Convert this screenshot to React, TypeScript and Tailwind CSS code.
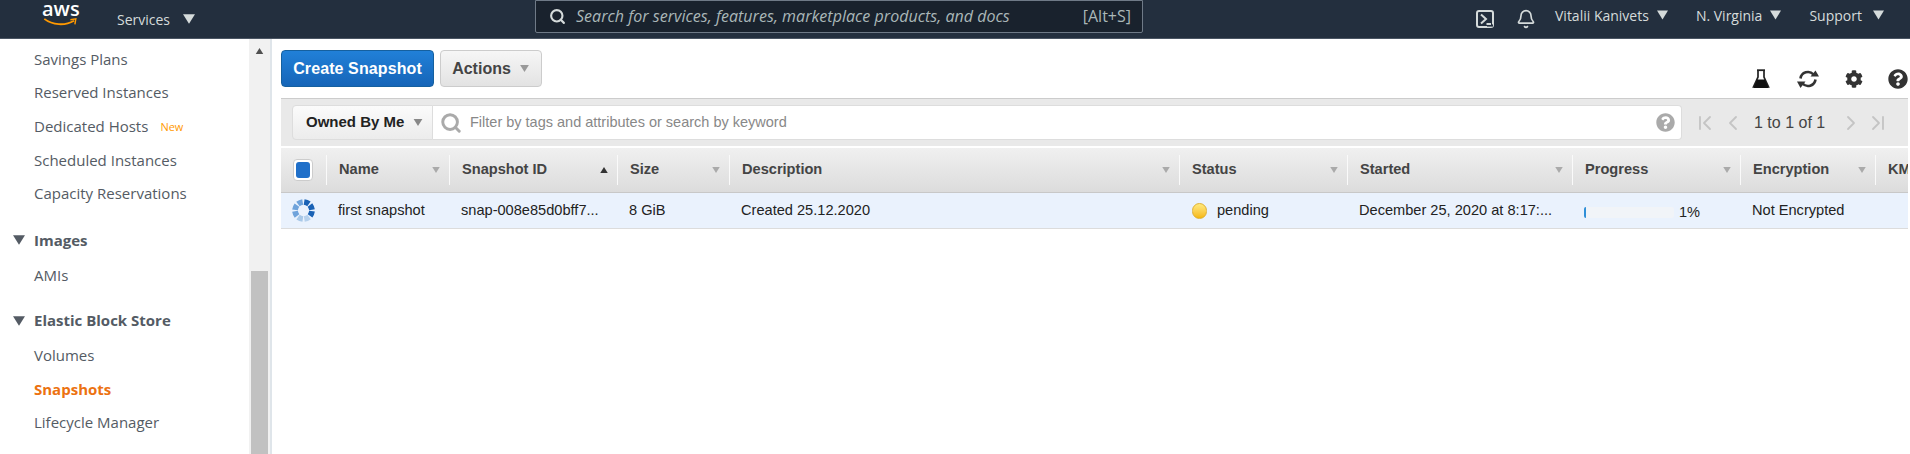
import React from 'react';
import { Bell, ChevronFirst, ChevronLast, ChevronLeft, ChevronRight, Search } from 'lucide-react';
import { FaCog, FaQuestionCircle } from 'react-icons/fa';

const sans = "font-['Liberation_Sans',Arial,sans-serif]";
const nav = "font-['Open_Sans',sans-serif]";

const columns = [
  { title: 'Name', width: 'w-[123px]', cell: 'first snapshot' },
  { title: 'Snapshot ID', width: 'w-[168px]', cell: 'snap-008e85d0bff7...', sorted: true },
  { title: 'Size', width: 'w-[112px]', cell: '8 GiB' },
  { title: 'Description', width: 'w-[450px]', cell: 'Created 25.12.2020' },
  { title: 'Status', width: 'w-[168px]', cell: 'pending' },
  { title: 'Started', width: 'w-[225px]', cell: 'December 25, 2020 at 8:17:...' },
  { title: 'Progress', width: 'w-[168px]', cell: '1%' },
  { title: 'Encryption', width: 'w-[135px]', cell: 'Not Encrypted' },
  { title: 'KMS', width: 'w-[33px]', cell: '' },
];

const Tri = ({ className }: { className: string }) => (
  <svg viewBox="0 0 10 8" className={className}>
    <path d="M0 0h10L5 8z" fill="currentColor" />
  </svg>
);

const Spinner = () => {
  const shades = ['#1a62b5', '#1a62b5', '#1a62b5', '#b5d0ec', '#a8c8e8', '#6fa3db', '#6fa3db', '#6fa3db'];
  return (
    <svg viewBox="0 0 24 24" className="w-[23px] h-[23px]">
      {shades.map((c, i) => (
        <path
          key={i}
          d="M8.6 0.6 Q12 -0.2 15.4 0.6 L14 6.4 Q12 6 10 6.4 Z"
          fill={c}
          transform={`rotate(${22 + i * 45} 12 12)`}
        />
      ))}
    </svg>
  );
};

const RefreshIcon = () => (
  <svg viewBox="0 0 24 22" className="w-[24px] h-[22px]" fill="none" stroke="#333" strokeWidth="2.6">
    <path d="M4.5 10.5 A7.5 7.5 0 0 1 17.5 6.5" />
    <path d="M19.5 11.5 A7.5 7.5 0 0 1 6.5 15.5" />
    <path d="M14.5 8.5 L23 8.5 L19.5 2.5 Z" fill="#333" stroke="none" />
    <path d="M1 13.5 L9.5 13.5 L4.5 20 Z" fill="#333" stroke="none" />
  </svg>
);

const NavItem = ({ label, active, badge }: { label: string; active?: boolean; badge?: string }) => (
  <div className={`h-[33.7px] pl-[34px] flex items-center gap-[12px] text-[15px] ${active ? 'text-[#ec7211] font-bold' : 'text-[#545b64]'}`}>
    {label}
    {badge && <span className="text-[11px] text-[#ff9900] mt-[2px]">{badge}</span>}
  </div>
);

const NavGroup = ({ label }: { label: string }) => (
  <div className="h-[33.7px] pl-[13px] flex items-center gap-[9px] text-[15px] font-bold text-[#545b64]">
    <Tri className="w-[12px] h-[10px]" />
    {label}
  </div>
);

const HeaderCell = ({ title, width, sorted }: { title: string; width: string; sorted?: boolean }) => (
  <div className={`${width} shrink-0 h-[30px] border-l border-[#fafafa] pl-[12px] pr-[3px] flex items-center justify-between text-[14.6px] font-bold text-[#444]`}>
    <span className="whitespace-nowrap">{title}</span>
    {title !== 'KMS' && (
      sorted
        ? <Tri className="w-[8px] h-[6px] rotate-180 text-[#333] mr-[6px]" />
        : <Tri className="w-[8px] h-[6px] text-[#aaa] mr-[6px]" />
    )}
  </div>
);

const Cell = ({ title, width, cell }: { title: string; width: string; cell: string }) => {
  if (title === 'Status') {
    return (
      <div className={`${width} shrink-0 pl-[13px] flex items-center gap-[10px]`}>
        <span className="w-[15px] h-[16px] rounded-full bg-gradient-to-b from-[#ffe97a] to-[#f5b800] border border-[#e0b030]" />
        {cell}
      </div>
    );
  }
  if (title === 'Progress') {
    return (
      <div className={`${width} shrink-0 pl-[12px] flex items-center gap-[5px] pt-[3px]`}>
        <div className="w-[90px] h-[11px] rounded-[2px] bg-[#f1f4f8] overflow-hidden">
          <div className="w-[2px] h-full bg-[#2f8fd8]" />
        </div>
        <span className="pt-[2px]">{cell}</span>
      </div>
    );
  }
  return <div className={`${width} shrink-0 pl-[12px] flex items-center whitespace-nowrap`}>{cell}</div>;
};

export default function App() {
  return (
    <div className={`w-[1910px] h-[454px] overflow-hidden bg-white flex flex-col ${sans}`}>
      <header className={`h-[39px] shrink-0 bg-[#232f3e] border-b border-[#4a5563] flex items-center text-[#d5dbdb] text-[14px] ${nav}`}>
        <div className="w-[117px] pl-[42px] shrink-0 relative h-full">
          <span className="absolute left-[42px] top-[-5px] text-[20px] font-semibold text-white leading-[28px]">aws</span>
          <svg viewBox="0 0 38 10" className="absolute left-[42px] top-[18px] w-[37px] h-[9px]">
            <path d="M1 1 C10 8 24 9 34 3" stroke="#ff9900" strokeWidth="2" fill="none" />
            <path d="M30 2 L36 1 L35 7" stroke="#ff9900" strokeWidth="1.6" fill="none" />
          </svg>
        </div>
        <div className="w-[418px] shrink-0 flex items-center gap-[13px]">
          Services
          <Tri className="w-[12px] h-[10px]" />
        </div>
        <div className="w-[608px] h-[33px] -mt-[6px] shrink-0 bg-[#19222d] border border-[#6f7a87] rounded-b-[2px] flex items-center pl-[13px] pr-[11px]">
          <Search className="w-[17px] h-[17px] text-[#d5dbdb]" strokeWidth={3} />
          <span className="ml-[10px] italic text-[16px] tracking-[0.03px] text-[#aab7b8]">Search for services, features, marketplace products, and docs</span>
          <span className="ml-auto text-[16px] text-[#aab7b8]">[Alt+S]</span>
        </div>
        <div className="ml-[333px] flex items-center text-[14px] -mt-[8px]">
          <svg viewBox="0 0 18 18" className="w-[18px] h-[18px] mt-[8px] text-[#d5dbdb]" fill="none" stroke="currentColor" strokeWidth="2">
            <rect x="1" y="1" width="16" height="16" rx="2" />
            <path d="M5 4.5 L10 9 L5 13.5" />
            <path d="M11 15.5 H17" strokeWidth="2.2" stroke="#232f3e" />
            <path d="M10.5 14 H15" />
          </svg>
          <Bell className="w-[20px] h-[20px] ml-[22px] mt-[8px]" strokeWidth={2} />
          <span className="ml-[19px]">Vitalii Kanivets</span>
          <Tri className="w-[11px] h-[10px] ml-[8px]" />
          <span className="ml-[28px]">N. Virginia</span>
          <Tri className="w-[11px] h-[10px] ml-[8px]" />
          <span className="ml-[28px]">Support</span>
          <Tri className="w-[11px] h-[10px] ml-[11px]" />
        </div>
      </header>

      <div className="flex-1 flex min-h-0">
        <aside className={`w-[249px] shrink-0 pt-[3px] ${nav}`}>
          <NavItem label="Savings Plans" />
          <NavItem label="Reserved Instances" />
          <NavItem label="Dedicated Hosts" badge="New" />
          <NavItem label="Scheduled Instances" />
          <NavItem label="Capacity Reservations" />
          <div className="h-[13px]" />
          <NavGroup label="Images" />
          <div className="h-[1px]" />
          <NavItem label="AMIs" />
          <div className="h-[12px]" />
          <NavGroup label="Elastic Block Store" />
          <div className="h-[1px]" />
          <NavItem label="Volumes" />
          <NavItem label="Snapshots" active />
          <NavItem label="Lifecycle Manager" />
        </aside>

        <div className="w-[21px] shrink-0 bg-[#f1f1f1] flex flex-col items-center">
          <Tri className="w-[9px] h-[6px] rotate-180 text-[#505050] mt-[9px] mb-[217px]" />
          <div className="w-[17px] flex-1 bg-[#c1c1c1]" />
        </div>
        <div className="w-[2px] shrink-0 bg-[#dfe5ea]" />

        <main className="flex-1 pl-[9px] pr-[2px] min-w-0">
          <div className="h-[59px] flex items-start pt-[11px] relative">
            <button className="w-[153px] h-[37px] rounded-[4px] border border-[#15609f] bg-gradient-to-b from-[#2180d8] to-[#1665b8] text-white text-[16px] font-bold tracking-[0.1px]">
              Create Snapshot
            </button>
            <button className="ml-[6px] w-[102px] h-[37px] rounded-[4px] border border-[#ccc] bg-gradient-to-b from-[#f6f6f6] to-[#e3e3e3] text-[#444] text-[16px] font-bold flex items-center justify-center gap-[8px]">
              Actions
              <Tri className="w-[11px] h-[7px] text-[#999]" />
            </button>
            <div className="ml-auto flex items-center mt-[18px] text-[#333] self-start">
              <svg viewBox="0 0 18 20" className="w-[18px] h-[20px]">
                <path d="M6 2v6L1.5 18h15L12 8V2" fill="none" stroke="#222" strokeWidth="1.7" />
                <path d="M5 1.2h8" stroke="#222" strokeWidth="1.8" />
                <path d="M5 10.5h8L16.5 19h-15z" fill="#111" />
              </svg>
              <div className="ml-[26px]">
                <RefreshIcon />
              </div>
              <FaCog className="ml-[25px] w-[18px] h-[18px]" />
              <FaQuestionCircle className="ml-[25px] w-[20px] h-[20px]" />
            </div>
          </div>

          <div className="h-[48px] bg-[#e9e9e9] border-t border-[#ccc] flex items-center pl-[11px]">
            <div className="w-[141px] h-[35px] rounded-l-[4px] border border-[#ddd] bg-gradient-to-b from-[#fbfbfb] to-[#ececec] flex items-center pl-[13px] gap-[9px] text-[15px] font-bold text-[#222]">
              Owned By Me
              <Tri className="w-[10px] h-[7px] text-[#888]" />
            </div>
            <div className="w-[1249px] h-[35px] rounded-r-[4px] border border-[#ddd] border-l-0 bg-white flex items-center pl-[7px] pr-[6px] text-[14.5px] text-[#888]">
              <Search className="w-[22px] h-[22px] text-[#aaa]" strokeWidth={3.2} />
              <span className="ml-[8px]">Filter by tags and attributes or search by keyword</span>
              <FaQuestionCircle className="ml-auto w-[19px] h-[19px] text-[#aaa]" />
            </div>
            <div className="ml-[11px] flex items-center text-[#c4c4c4]">
              <ChevronFirst className="w-[24px] h-[24px]" strokeWidth={1.8} />
              <ChevronLeft className="ml-[4px] w-[24px] h-[24px]" strokeWidth={1.8} />
              <span className="ml-[9px] text-[16px] text-[#444] whitespace-nowrap">1 to 1 of 1</span>
              <ChevronRight className="ml-[14px] w-[24px] h-[24px]" strokeWidth={1.8} />
              <ChevronLast className="ml-[3px] w-[24px] h-[24px]" strokeWidth={1.8} />
            </div>
          </div>

          <div className="h-[47px] border-t-2 border-white border-b border-b-[#c8c8c8] bg-gradient-to-b from-[#f0f0f0] to-[#dcdcdc] flex items-center overflow-hidden">
            <div className="w-[45px] shrink-0 pl-[12px]">
              <div className="w-[20px] h-[22px] rounded-[4px] border border-[#ccc] bg-white p-[2px]">
                <div className="w-full h-full rounded-[3px] bg-[#1f6fc9]" />
              </div>
            </div>
            {columns.map((c) => (
              <HeaderCell key={c.title} title={c.title} width={c.width} sorted={c.sorted} />
            ))}
          </div>

          <div className="h-[36px] bg-[#eaf2fd] border-b border-[#dcdcdc] flex text-[14.6px] text-[#222] overflow-hidden">
            <div className="w-[45px] shrink-0 pl-[11px] flex items-center">
              <Spinner />
            </div>
            {columns.map((c) => (
              <Cell key={c.title} title={c.title} width={c.width} cell={c.cell} />
            ))}
          </div>
        </main>
      </div>
    </div>
  );
}
